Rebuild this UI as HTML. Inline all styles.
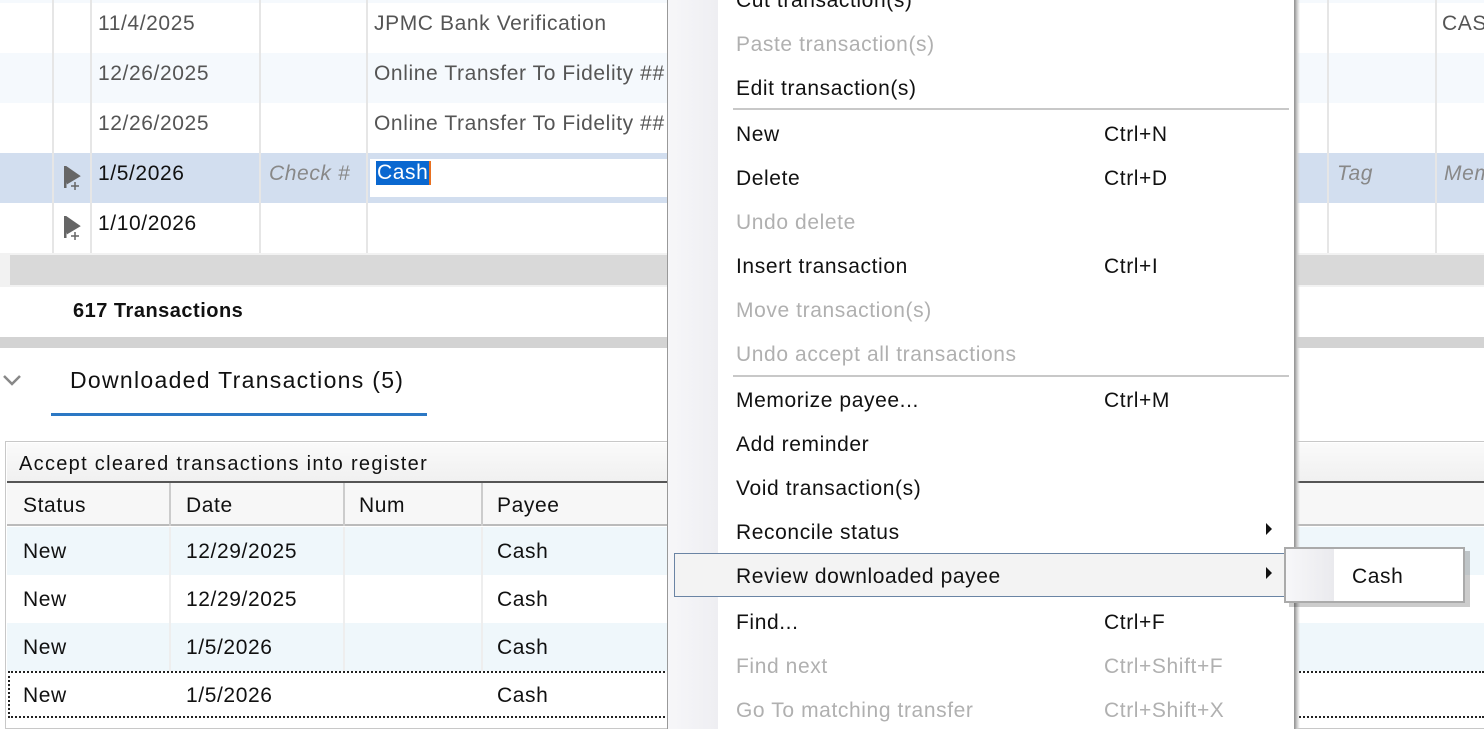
<!DOCTYPE html>
<html><head><style>
*{margin:0;padding:0;box-sizing:border-box}
body{width:1484px;height:729px;overflow:hidden;background:#fff;font-family:"Liberation Sans",sans-serif;color:#111;position:relative}
.a{position:absolute}
.t{position:absolute;font-size:21px;letter-spacing:0.6px;white-space:nowrap;line-height:24px}
.g{color:#555}
.vl{position:absolute;width:2px;background:#e6e6e6}
.mi{position:absolute;left:736px;font-size:21px;letter-spacing:0.6px;line-height:24px;white-space:nowrap}
.sc{position:absolute;left:1104px;font-size:21px;letter-spacing:0.6px;line-height:24px;white-space:nowrap}
.dis{color:#b0b0b0}
</style></head><body>
<!-- register -->
<div class="a" style="left:0;top:0;width:1484px;height:3px;background:#f5f9fd"></div>
<div class="a" style="left:0;top:53px;width:1484px;height:50px;background:#f5f9fd"></div>
<div class="a" style="left:0;top:153px;width:1484px;height:50px;background:#d2deef"></div>
<div class="a" style="left:370px;top:159px;width:300px;height:38px;background:#fff"></div>
<div class="vl" style="left:52px;top:0;height:253px"></div>
<div class="vl" style="left:90px;top:0;height:253px"></div>
<div class="vl" style="left:259px;top:0;height:253px"></div>
<div class="vl" style="left:366px;top:0;height:253px"></div>
<div class="vl" style="left:1327px;top:0;height:253px"></div>
<div class="vl" style="left:1435px;top:0;height:253px"></div>
<div class="t g" style="left:98px;top:12px">11/4/2025</div>
<div class="t g" style="left:374px;top:12px">JPMC Bank Verification</div>
<div class="t" style="left:1442px;top:12px;color:#555">CASH</div>
<div class="t g" style="left:98px;top:62px">12/26/2025</div>
<div class="t g" style="left:374px;top:62px">Online Transfer To Fidelity ##</div>
<div class="t g" style="left:98px;top:112px">12/26/2025</div>
<div class="t g" style="left:374px;top:112px">Online Transfer To Fidelity ##</div>
<div class="t" style="left:98px;top:162px">1/5/2026</div>
<div class="t" style="left:269px;top:162px;color:#888;font-style:italic">Check #</div>
<div class="t" style="left:376px;top:161px;background:#0a68d0;color:#fff;padding:0 1px;border-right:2px solid #e87020">Cash</div>
<div class="t" style="left:1337px;top:162px;color:#888;font-style:italic">Tag</div>
<div class="t" style="left:1444px;top:162px;color:#888;font-style:italic">Memo</div>
<div class="t" style="left:98px;top:212px">1/10/2026</div>
<svg class="a" style="left:64px;top:166px" width="18" height="28"><path d="M1 1 L14 10 L4 16 Z M1 1 V22" fill="#666" stroke="#666" stroke-width="3"/><path d="M7 20 H15 M11 16 V24" stroke="#666" stroke-width="1.5"/></svg>
<svg class="a" style="left:64px;top:216px" width="18" height="28"><path d="M1 1 L14 10 L4 16 Z M1 1 V22" fill="#666" stroke="#666" stroke-width="3"/><path d="M7 20 H15 M11 16 V24" stroke="#666" stroke-width="1.5"/></svg>
<div class="a" style="left:0;top:253px;width:1484px;height:34px;background:#f2f2f2"></div>
<div class="a" style="left:10px;top:255px;width:1474px;height:30px;background:#d9d9d9"></div>
<div class="t" style="left:73px;top:299px;font-weight:bold;font-size:20px;letter-spacing:0.5px">617 Transactions</div>
<div class="a" style="left:0;top:337px;width:1484px;height:11px;background:#d3d3d3"></div>
<svg class="a" style="left:2px;top:374px" width="22" height="14"><path d="M2 2 L10 10 L18 2" fill="none" stroke="#888" stroke-width="2.5"/></svg>
<div class="t" style="left:70px;top:368px;font-size:23px;letter-spacing:1.3px">Downloaded Transactions (5)</div>
<div class="a" style="left:51px;top:413px;width:376px;height:3px;background:#2c78c4"></div>
<!-- downloaded table -->
<div class="a" style="left:5px;top:441px;width:1479px;height:288px;border:1px solid #c8c8c8;border-right:none"></div>
<div class="a" style="left:7px;top:443px;width:1477px;height:39px;background:linear-gradient(#fafafa,#f0f0f0)"></div>
<div class="t" style="left:19px;top:452px;font-size:20px;letter-spacing:1.3px">Accept cleared transactions into register</div>
<div class="a" style="left:7px;top:481px;width:1477px;height:2px;background:#555"></div>
<div class="a" style="left:7px;top:483px;width:1477px;height:43px;background:#f7f7f7;border-bottom:2px solid #bbb"></div>
<div class="vl" style="left:169px;top:483px;height:43px;background:#ccc"></div>
<div class="vl" style="left:343px;top:483px;height:43px;background:#ccc"></div>
<div class="vl" style="left:481px;top:483px;height:43px;background:#ccc"></div>
<div class="t" style="left:23px;top:494px">Status</div>
<div class="t" style="left:186px;top:494px">Date</div>
<div class="t" style="left:359px;top:494px">Num</div>
<div class="t" style="left:497px;top:494px">Payee</div>
<div class="a" style="left:7px;top:527px;width:1477px;height:48px;background:#eff7fb"></div>
<div class="a" style="left:7px;top:623px;width:1477px;height:48px;background:#eff7fb"></div>
<div class="vl" style="left:169px;top:527px;height:144px;background:#eee"></div>
<div class="vl" style="left:343px;top:527px;height:144px;background:#eee"></div>
<div class="vl" style="left:481px;top:527px;height:144px;background:#eee"></div>
<div class="a" style="left:8px;top:671px;width:1476px;height:47px;border:2px dotted #222;border-right:none"></div>
<div class="t" style="left:23px;top:540px">New</div><div class="t" style="left:186px;top:540px">12/29/2025</div><div class="t" style="left:497px;top:540px">Cash</div>
<div class="t" style="left:23px;top:588px">New</div><div class="t" style="left:186px;top:588px">12/29/2025</div><div class="t" style="left:497px;top:588px">Cash</div>
<div class="t" style="left:23px;top:636px">New</div><div class="t" style="left:186px;top:636px">1/5/2026</div><div class="t" style="left:497px;top:636px">Cash</div>
<div class="t" style="left:23px;top:684px">New</div><div class="t" style="left:186px;top:684px">1/5/2026</div><div class="t" style="left:497px;top:684px">Cash</div>
<!-- context menu -->
<div class="a" style="left:1294px;top:0;width:6px;height:729px;background:linear-gradient(90deg,#888,#ccc,rgba(255,255,255,0))"></div>
<div class="a" style="left:667px;top:0;width:628px;height:729px;background:#fff;border-left:1px solid #999;border-right:1px solid #999"></div>
<div class="a" style="left:668px;top:0;width:50px;height:729px;background:linear-gradient(90deg,#f7f7f9,#eeeef2)"></div>
<div class="a" style="left:733px;top:108px;width:556px;height:2px;background:#c8c8c8"></div>
<div class="a" style="left:733px;top:375px;width:556px;height:2px;background:#c8c8c8"></div>
<div class="a" style="left:674px;top:553px;width:611px;height:44px;background:#f3f3f3;border:1px solid #6a84a4"></div>
<div class="mi" style="top:-11px">Cut transaction(s)</div>
<div class="mi dis" style="top:33px">Paste transaction(s)</div>
<div class="mi" style="top:77px">Edit transaction(s)</div>
<div class="mi" style="top:123px">New</div><div class="sc" style="top:123px">Ctrl+N</div>
<div class="mi" style="top:167px">Delete</div><div class="sc" style="top:167px">Ctrl+D</div>
<div class="mi dis" style="top:211px">Undo delete</div>
<div class="mi" style="top:255px">Insert transaction</div><div class="sc" style="top:255px">Ctrl+I</div>
<div class="mi dis" style="top:299px">Move transaction(s)</div>
<div class="mi dis" style="top:343px">Undo accept all transactions</div>
<div class="mi" style="top:389px">Memorize payee...</div><div class="sc" style="top:389px">Ctrl+M</div>
<div class="mi" style="top:433px">Add reminder</div>
<div class="mi" style="top:477px">Void transaction(s)</div>
<div class="mi" style="top:521px">Reconcile status</div>
<div class="mi" style="top:565px">Review downloaded payee</div>
<div class="mi" style="top:611px">Find...</div><div class="sc" style="top:611px">Ctrl+F</div>
<div class="mi dis" style="top:655px">Find next</div><div class="sc dis" style="top:655px">Ctrl+Shift+F</div>
<div class="mi dis" style="top:699px">Go To matching transfer</div><div class="sc dis" style="top:699px">Ctrl+Shift+X</div>
<svg class="a" style="left:1265px;top:523px" width="8" height="12"><path d="M1 0 L7 6 L1 12Z" fill="#111"/></svg>
<svg class="a" style="left:1265px;top:567px" width="8" height="12"><path d="M1 0 L7 6 L1 12Z" fill="#111"/></svg>
<!-- submenu -->
<div class="a" style="left:1289px;top:551px;width:181px;height:56px;background:rgba(0,0,0,0.2)"></div>
<div class="a" style="left:1284px;top:547px;width:181px;height:56px;background:#fff;border:2px solid #aaa"></div>
<div class="a" style="left:1286px;top:549px;width:48px;height:52px;background:linear-gradient(90deg,#f7f7f9,#eaeaee)"></div>
<div class="t" style="left:1352px;top:565px">Cash</div>
</body></html>
